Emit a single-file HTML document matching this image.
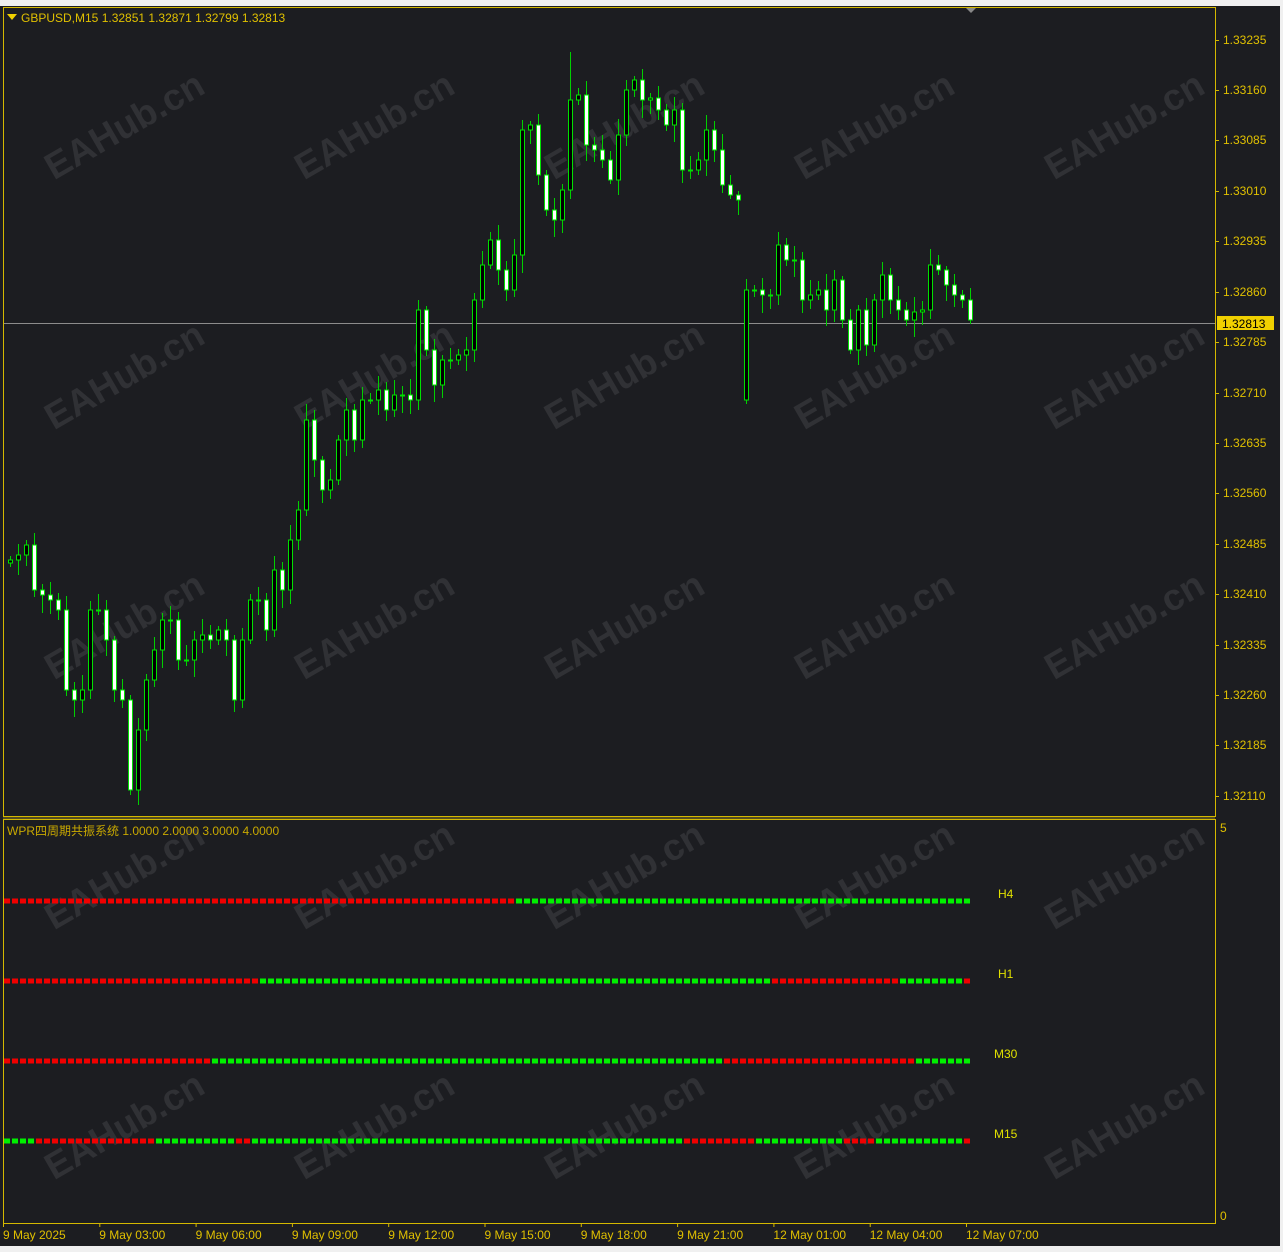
<!DOCTYPE html>
<html><head><meta charset="utf-8"><style>
html,body{margin:0;padding:0;background:#fff;}
#w{position:relative;width:1283px;height:1252px;background:#f0f0f0;overflow:hidden;font-family:"Liberation Sans","Noto Sans CJK SC",sans-serif;}
svg{position:absolute;left:0;top:0;}
</style></head><body><div id="w">
<svg id="s" width="1283" height="1252" xmlns="http://www.w3.org/2000/svg" font-family="Liberation Sans, Noto Sans CJK SC, sans-serif">
<rect x="0" y="6" width="1280" height="1240" fill="#1c1d21"/>
<g id="wm" fill="#ffffff" fill-opacity="0.09" font-size="37" font-weight="bold"></g>
<rect x="3.5" y="7.5" width="1212" height="809" fill="none" stroke="#d4b800"/>
<rect x="3.5" y="819.5" width="1212" height="404" fill="none" stroke="#d4b800"/>
<line x1="3" y1="818" x2="1215" y2="818" stroke="#8a7a20"/>
<polygon points="966,8 976,8 971,13" fill="#888"/>
<line x1="4" y1="323.5" x2="1215" y2="323.5" stroke="#8c8c8c"/>
<g id="c"></g>
<g id="d"></g>
<g id="ax" fill="#e0c000" font-size="12"></g>
<polygon points="7,14 17,14 12,20" fill="#f0d000"/>
<text x="21" y="22" fill="#e0c000" font-size="12">GBPUSD,M15  1.32851 1.32871 1.32799 1.32813</text>
<text x="7" y="835" fill="#c8a800" font-size="12">WPR四周期共振系统 1.0000 2.0000 3.0000 4.0000</text>
<g fill="#e0e000" font-size="12"><text x="998" y="898">H4</text><text x="998" y="978">H1</text><text x="994" y="1058">M30</text><text x="994" y="1138">M15</text></g>
<rect x="1217" y="316" width="57" height="14" fill="#f0d000"/>
<text x="1222" y="328" fill="#000" font-size="12">1.32813</text>
</svg>
<script>
var N="http://www.w3.org/2000/svg";
function el(t,a,p){var e=document.createElementNS(N,t);for(var k in a)e.setAttribute(k,a[k]);p.appendChild(e);return e;}
var wm=document.getElementById('wm');
[0,250,500,750,1000].forEach(function(x){[125,375,625,875,1125].forEach(function(y){var cx=x+124;var t=el('text',{x:cx,y:y+13,'text-anchor':'middle',transform:'rotate(-30 '+cx+' '+y+')'},wm);t.textContent='EAHub.cn';});});
var cl=[560,555,545,590,595,600,610,690,700,690,610,610,640,690,700,790,730,680,650,620,620,660,660,640,635,640,630,640,700,640,600,600,630,570,590,540,510,420,460,490,480,440,410,440,400,400,390,410,395,395,400,310,350,385,360,360,355,350,300,265,240,270,290,255,130,125,175,210,220,190,100,95,145,150,160,180,135,90,80,100,98,110,125,110,170,170,160,130,150,185,195,200,290,290,295,295,245,260,260,300,295,290,310,280,320,350,310,345,300,275,300,310,320,312,310,265,270,285,295,300,320];
var g=document.getElementById('c');var prev=563;
for(var i=0;i<cl.length;i++){var x=10+i*8;var o=prev,c=cl[i];if(i==92){o=400;}
var hi=Math.min(o,c)-(4+((i*7)%13)),lo=Math.max(o,c)+(4+((i*11)%15));
if(i==70)hi=52;if(i==15)lo=795;if(i==92)lo=404;
el('line',{x1:x+0.5,y1:hi,x2:x+0.5,y2:lo,stroke:'#00d000'},g);
var t=Math.min(o,c),h=Math.max(Math.abs(o-c),1);
el('rect',{x:x-1.5,y:t,width:4,height:h,fill:c<o?'#000':'#fff',stroke:'#00e000','stroke-width':1},g);
prev=c;}
var d=document.getElementById('d');
var rows=[[901,[[0,'r'],[512,'g']]],[981,[[0,'r'],[256,'g'],[768,'r'],[896,'g'],[962,'r']]],[1061,[[0,'r'],[208,'g'],[720,'r'],[912,'g']]],[1141,[[0,'g'],[32,'r'],[152,'g'],[232,'r'],[248,'g'],[680,'r'],[752,'g'],[840,'r'],[872,'g'],[962,'r']]]];
rows.forEach(function(r){for(var x=4;x<=964;x+=8){var col='g';r[1].forEach(function(s){if(x>=s[0])col=s[1];});el('rect',{x:x,y:r[0]-2.5,width:6,height:5,fill:col=='g'?'#00f000':'#f00000'},d);}});
var ax=document.getElementById('ax');
var pr=['1.33235','1.33160','1.33085','1.33010','1.32935','1.32860','1.32785','1.32710','1.32635','1.32560','1.32485','1.32410','1.32335','1.32260','1.32185','1.32110'];
var py=[40,90,140,191,241,292,342,393,443,493,544,594,645,695,745,796];
pr.forEach(function(p,i){el('line',{x1:1215,y1:py[i]+0.5,x2:1219,y2:py[i]+0.5,stroke:'#d4b800'},ax);var t=el('text',{x:1223,y:py[i]+4},ax);t.textContent=p;});
var t=el('text',{x:1220,y:832},ax);t.textContent='5';t=el('text',{x:1220,y:1220},ax);t.textContent='0';
var tl=['9 May 2025','9 May 03:00','9 May 06:00','9 May 09:00','9 May 12:00','9 May 15:00','9 May 18:00','9 May 21:00','12 May 01:00','12 May 04:00','12 May 07:00'];
tl.forEach(function(s,i){var x=3+i*96.3;el('line',{x1:x+0.5,y1:1223,x2:x+0.5,y2:1227,stroke:'#d4b800'},ax);var t=el('text',{x:x,y:1239},ax);t.textContent=s;});
</script>
</div></body></html>
